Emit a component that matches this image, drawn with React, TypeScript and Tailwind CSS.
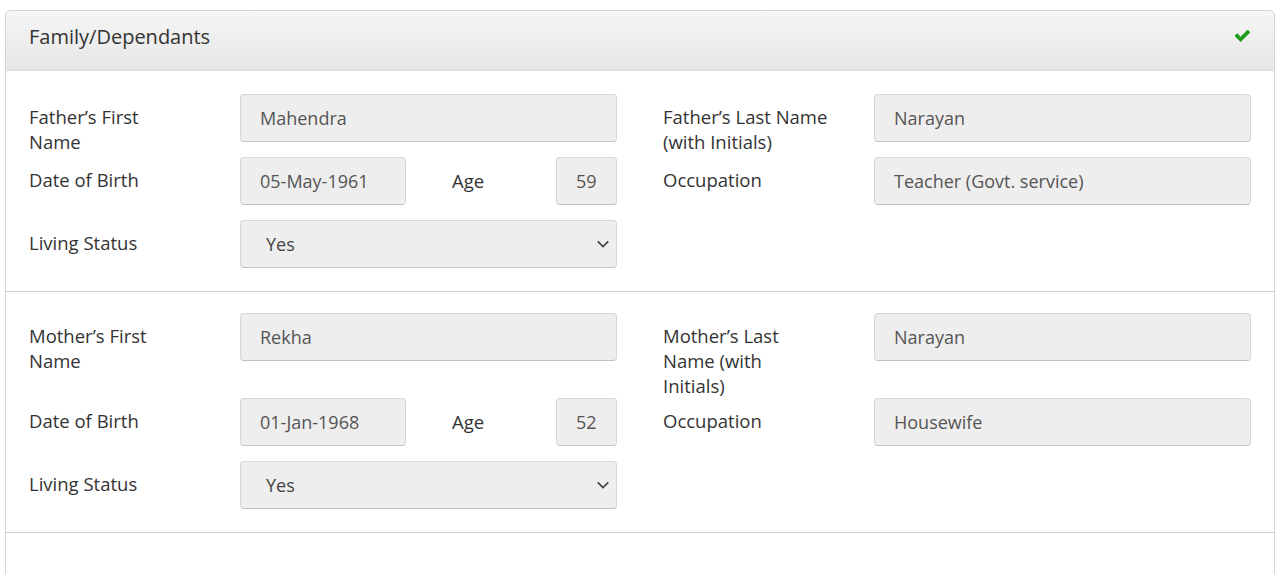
import React from 'react';

const font = { fontFamily: '"Open Sans", "Liberation Sans", sans-serif' };

const TextBox: React.FC<{ value: string; className?: string }> = ({ value, className = '' }) => (
  <div
    className={`h-[48px] flex items-center pl-[19px] pr-3 rounded-[4px] bg-[#eeeeee] border border-[#d6d6d6] border-b-[#c2c2c2] text-[#555] text-[18px] whitespace-nowrap ${className}`}
  >
    {value}
  </div>
);

const SelectBox: React.FC<{ value: string }> = ({ value }) => (
  <div className="h-[48px] flex items-center justify-between pl-[25px] pr-[6px] rounded-[4px] bg-[#eeeeee] border border-[#d6d6d6] border-b-[#c2c2c2] text-[#444] text-[18px]">
    <span>{value}</span>
    <svg className="w-[14px] h-[14px]" viewBox="0 0 16 16" fill="none" stroke="#444" strokeWidth="2">
      <path d="M2 5l6 6 6-6" />
    </svg>
  </div>
);

const Field: React.FC<{ label: string[]; children: React.ReactNode }> = ({ label, children }) => (
  <div className="flex items-start">
    <label className="w-[211px] shrink-0 pt-[10px] leading-[25px] text-[18.5px] text-[#333]">
      {label.map((line, i) => (
        <span key={i} className="block">
          {line}
        </span>
      ))}
    </label>
    <div className="flex-1 mb-[15px]">{children}</div>
  </div>
);

type Parent = {
  first: string;
  last: string;
  dob: string;
  age: string;
  occupation: string;
  living: string;
  firstLabel: string[];
  lastLabel: string[];
};

const parents: Parent[] = [
  {
    first: 'Mahendra',
    last: 'Narayan',
    dob: '05-May-1961',
    age: '59',
    occupation: 'Teacher (Govt. service)',
    living: 'Yes',
    firstLabel: ['Father’s First', 'Name'],
    lastLabel: ['Father’s Last Name', '(with Initials)'],
  },
  {
    first: 'Rekha',
    last: 'Narayan',
    dob: '01-Jan-1968',
    age: '52',
    occupation: 'Housewife',
    living: 'Yes',
    firstLabel: ['Mother’s First', 'Name'],
    lastLabel: ['Mother’s Last', 'Name (with', 'Initials)'],
  },
];

const ParentSection: React.FC<{ p: Parent; first: boolean }> = ({ p, first }) => (
  <div className={`px-[23px] pb-2 border-b border-[#cccccc] ${first ? 'pt-[23px]' : 'pt-[21px]'}`}>
    <div className="grid grid-cols-2 gap-x-[46px]">
      <Field label={p.firstLabel}>
        <TextBox value={p.first} />
      </Field>
      <Field label={p.lastLabel}>
        <TextBox value={p.last} />
      </Field>
    </div>
    <div className="grid grid-cols-2 gap-x-[46px]">
      <Field label={['Date of Birth']}>
        <div className="flex items-center">
          <TextBox value={p.dob} className="w-[166px]" />
          <span className="ml-[46px] text-[18.5px] text-[#333]">Age</span>
          <div className="flex-1" />
          <TextBox value={p.age} className="w-[61px]" />
        </div>
      </Field>
      <Field label={['Occupation']}>
        <TextBox value={p.occupation} />
      </Field>
    </div>
    <div className="grid grid-cols-2 gap-x-[46px]">
      <Field label={['Living Status']}>
        <SelectBox value={p.living} />
      </Field>
      <div />
    </div>
  </div>
);

export default function App() {
  return (
    <div className="h-[574px] overflow-hidden bg-white pt-[10px] pl-[5px] pr-[10px]" style={font}>
      <div className="border border-[#d4d4d4] rounded-t-[5px] min-h-[640px]">
        <div className="h-[60px] flex items-start justify-between px-[23px] rounded-t-[5px] bg-gradient-to-b from-[#f5f5f5] to-[#e7e7e7] border-b border-[#dddddd]">
          <h2 className="mt-[12px] leading-[28px] text-[20px] text-[#333]">Family/Dependants</h2>
          <svg className="w-[15px] h-[12px] mt-[19px] mr-[1px]" viewBox="140 360 1535 1165" fill="#1c9e1c">
            <path d="M1671 566q0 40-28 68l-724 724-136 136q-28 28-68 28t-68-28l-136-136-362-362q-28-28-28-68t28-68l136-136q28-28 68-28t68 28l294 295 656-657q28-28 68-28t68 28l136 136q28 28 28 68z" />
          </svg>
        </div>
        {parents.map((p, i) => (
          <ParentSection key={p.first} p={p} first={i === 0} />
        ))}
      </div>
    </div>
  );
}
